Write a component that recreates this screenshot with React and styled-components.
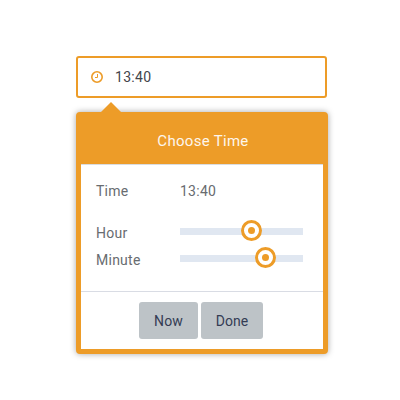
import React from 'react';
import styled, { createGlobalStyle } from 'styled-components';

const Global = createGlobalStyle`
  * { box-sizing: border-box; }
  body { margin: 0; background: #fff; font-family: Roboto, sans-serif; font-size: 14px; color: #686c70; }
`;

const Page = styled.main`
  width: 400px;
  height: 400px;
  padding: 56px 0 0 76px;
`;

const Field = styled.div`
  display: flex;
  align-items: center;
  width: 251px;
  height: 42px;
  padding: 0 13px;
  border: 2px solid #ed9c28;
  border-radius: 3px;
  background: #fff;
  color: #43454b;
`;

const ClockIcon = styled.svg`
  width: 12px;
  height: 12px;
  margin-right: 12px;
  fill: none;
  stroke: #ed9c28;
`;

const Value = styled.span`
  line-height: 20px;
  letter-spacing: 0.3px;
`;

const Popup = styled.section`
  position: relative;
  width: 252px;
  height: 242px;
  margin-top: 14px;
  border: 5px solid #ed9c28;
  border-radius: 4px;
  background: #fff;
  box-shadow: 0 0 6px rgba(0, 0, 0, 0.35);
`;

const Arrow = styled.span`
  position: absolute;
  top: -15px;
  left: 20px;
  border: solid transparent;
  border-width: 0 10px 10px;
  border-bottom-color: #ed9c28;
`;

const Title = styled.h1`
  margin: 0;
  height: 48px;
  padding: 14px 0 0 2px;
  background: #ed9c28;
  border-bottom: 1px solid #d9dce0;
  color: #fdf6ec;
  font-size: 15px;
  font-weight: 400;
  line-height: 20px;
  letter-spacing: 0.3px;
  text-align: center;
`;

const Body = styled.div`
  height: 126px;
  padding: 12px 20px 0 15px;
`;

const Row = styled.div`
  display: grid;
  grid-template-columns: 84px 123px;
  align-items: center;
  height: 27px;
  margin-bottom: ${(p) => (p.$gap ? 15 : 0)}px;
  letter-spacing: 0.25px;
`;

const Track = styled.div`
  position: relative;
  top: -1px;
  height: 7px;
  background: #e0e7f1;
`;

const Handle = styled.span`
  position: absolute;
  top: -8px;
  left: ${(p) => p.$at}px;
  display: grid;
  place-items: center;
  width: 21px;
  height: 21px;
  border: 3px solid #ed9c28;
  border-radius: 50%;
  background: #fff;

  &::after {
    content: '';
    width: 7px;
    height: 7px;
    border-radius: 50%;
    background: #ed9c28;
  }
`;

const Actions = styled.footer`
  display: flex;
  justify-content: center;
  gap: 3px;
  height: 58px;
  padding: 10px 2px 0 0;
  border-top: 1px solid #d9dce4;
`;

const Button = styled.button`
  width: ${(p) => p.$width}px;
  height: 37px;
  padding: 2px 0 0;
  border: 0;
  border-radius: 3px;
  background: #bdc3c7;
  color: #343c54;
  font: 400 14px/35px Roboto, sans-serif;
  letter-spacing: 0.1px;
`;

function Slider({ at }) {
  return (
    <Track>
      <Handle $at={at} />
    </Track>
  );
}

export default function App() {
  return (
    <Page>
      <Global />
      <Field>
        <ClockIcon viewBox="0 0 12 12">
          <circle cx="6" cy="6" r="5.2" strokeWidth="1.6" />
          <path d="M6.500 3v3.500H4" strokeWidth="1" />
        </ClockIcon>
        <Value>13:40</Value>
      </Field>
      <Popup>
        <Arrow />
        <Title>Choose Time</Title>
        <Body>
          <Row $gap>
            <span>Time</span>
            <span>13:40</span>
          </Row>
          <Row>
            <span>Hour</span>
            <Slider at={61} />
          </Row>
          <Row>
            <span>Minute</span>
            <Slider at={75} />
          </Row>
        </Body>
        <Actions>
          <Button $width={59}>Now</Button>
          <Button $width={62}>Done</Button>
        </Actions>
      </Popup>
    </Page>
  );
}
